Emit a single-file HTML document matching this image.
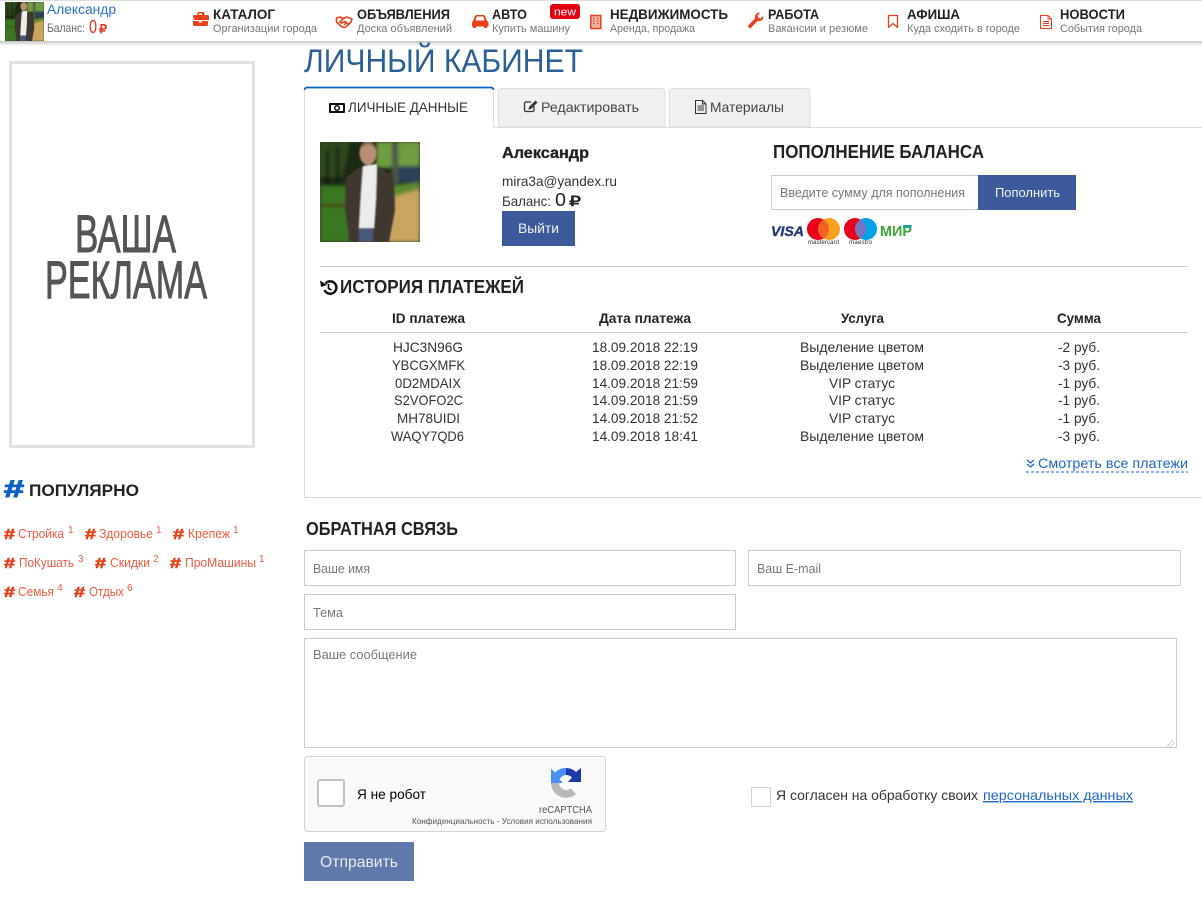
<!DOCTYPE html>
<html lang="ru"><head><meta charset="utf-8"><title>Личный кабинет</title>
<style>
html,body{margin:0;padding:0;background:#fff;width:1202px;height:909px;overflow:hidden}
svg{display:block}
text{font-family:"Liberation Sans",Arial,sans-serif;fill:#333;font-size:14px}
.b{font-weight:bold;fill:#222}
.s{fill:#777;font-size:11px}
.nav{font-weight:bold;fill:#222;font-size:14px}
.ph{fill:#777;font-size:13px}
.tag{fill:#ef5a40;font-size:13px}
.sup{fill:#ef5a40;font-size:10px}
.hash{fill:#e8401c;font-size:15px;font-weight:bold;stroke:#e8401c;stroke-width:.6px}
.m{text-anchor:middle}
</style></head><body>
<svg width="1202" height="909" viewBox="0 0 1202 909" xmlns="http://www.w3.org/2000/svg">
<defs>
<linearGradient id="sh" x1="0" y1="0" x2="0" y2="1"><stop offset="0" stop-color="#c4c4c4"/><stop offset="1" stop-color="#fff"/></linearGradient>
<filter id="bl"><feGaussianBlur stdDeviation="1.800"/></filter>
<filter id="bl2"><feGaussianBlur stdDeviation=".7"/></filter>
<clipPath id="cp"><rect x="0" y="0" width="100" height="100"/></clipPath>
<g id="ph" clip-path="url(#cp)">
<rect width="100" height="100" fill="#2c3f1e"/>
<g filter="url(#bl)">
<rect x="0" y="0" width="100" height="46" fill="#1c2a14"/>
<path d="M0 0H30L22 35H0Z" fill="#2e4a1c"/>
<rect x="6" y="8" width="3" height="36" fill="#14180f"/>
<rect x="16" y="5" width="3" height="38" fill="#14180f"/>
<rect x="57" y="0" width="43" height="25" fill="#6f9c42"/>
<rect x="72" y="0" width="6" height="42" fill="#4c5646"/>
<rect x="78" y="24" width="22" height="16" fill="#2a4158"/>
<rect x="0" y="44" width="30" height="56" fill="#3a7620"/>
<rect x="0" y="62" width="28" height="3" fill="#46401f"/>
<path d="M74 54L100 46V100H66Z" fill="#c9a55f"/>
<path d="M73 44L100 40V47L73 55Z" fill="#5f8a30"/>
</g>
<g filter="url(#bl2)">
<path d="M26 36L40 25H58L73 33L75 68L69 100H30L25 68Z" fill="#40372e"/>
<path d="M43 24L57 22L56 56L54 86H39L41 52Z" fill="#ececea"/>
<rect x="39" y="86" width="14" height="14" fill="#47587a"/>
<ellipse cx="48" cy="11" rx="8.500" ry="12" fill="#ba8d75"/>
<path d="M40 7Q48 -3 56 7L55 3Q48 -2 41 3Z" fill="#6d5648"/>
</g>
</g>
</defs>

<!-- header -->
<rect x="0" y="0" width="1202" height="41" fill="#fff"/>
<rect x="0" y="0" width="1202" height="1" fill="#ddd"/>
<rect x="0" y="41" width="1202" height="5" fill="url(#sh)"/>
<g transform="translate(5 2) scale(.39)"><use href="#ph"/></g>
<text x="47" y="14" style="fill:#2a6fd0" textLength="69" lengthAdjust="spacingAndGlyphs">Александр</text>
<text x="47" y="32" style="fill:#666;font-size:12px" textLength="38" lengthAdjust="spacingAndGlyphs">Баланс:</text>
<text x="89" y="33" style="fill:#e8301c;font-size:18px" textLength="8" lengthAdjust="spacingAndGlyphs">0</text>
<text x="99" y="33" style="fill:#e8301c;font-size:12px;font-weight:bold" textLength="8" lengthAdjust="spacingAndGlyphs">₽</text>

<!-- nav icons -->
<g fill="#e8401c">
<path d="M193 16.500a1.500 1.500 0 0 1 1.500-1.500h3V13.500a1.500 1.500 0 0 1 1.500-1.500h4a1.500 1.500 0 0 1 1.500 1.500V15h3a1.500 1.500 0 0 1 1.500 1.500V20h-15ZM199 13.500V15h3v-1.500h-3Z" fill-rule="evenodd"/>
<path d="M193 21h6v1.500h3V21h6v3.500a1.500 1.500 0 0 1-1.500 1.500h-12a1.500 1.500 0 0 1-1.500-1.500Z"/>
<path d="M473 21l2-5a1.500 1.500 0 0 1 1.500-1h7a1.500 1.500 0 0 1 1.500 1l2 5a2.500 2.500 0 0 1 1.500 2V26.500h-1.500v1.500h-3V26.500h-8V28h-3v-1.500H472V23a2.500 2.500 0 0 1 1-2ZM475.500 20.500h9l-1.300-4h-6.400Z" fill-rule="evenodd"/>
<path d="M749 27.500a1.700 1.700 0 0 1-.5-2.400l6.500-6.500a4.500 4.500 0 0 1 5.200-5.800l-2.600 2.700.6 2.400 2.400.6 2.600-2.600a4.500 4.500 0 0 1-5.700 5.200l-6.200 6.400a1.300 1.300 0 0 1-2.300 0Z"/>
</g>
<g fill="none" stroke="#e8401c">
<path d="M336.500 18l3.500 -1 3 1.500 3.500-1.500 5.500 2-1 3-4 4-2.500 1.500-3-1-4-3.500-1-1ZM343 19l-3 3 2 1 3-1.500 3.500 3M346 22l-1.500 3" stroke-width="1.600" stroke-linejoin="round"/>
<rect x="590.800" y="15.500" width="10" height="13" stroke-width="1.500" fill="#f6b3a4"/>
<path d="M593 18.500h1.500M597 18.500h1.500M593 21h1.500M597 21h1.500M593 23.500h1.500M597 23.500h1.500" stroke-width="1.300"/>
<path d="M888.500 15.500h9v12l-4.500-4-4.500 4Z" stroke-width="1.300" stroke-linejoin="round"/>
<path d="M1040.500 15.500h7.500l3.500 3.500v9.500H1040.500ZM1048 15.500v3.500h3.500M1043 21.500h6M1043 23.500h6M1043 25.500h6" stroke-width="1"/>
</g>

<!-- nav text -->
<text x="213" y="19" class="nav" textLength="62" lengthAdjust="spacingAndGlyphs">КАТАЛОГ</text>
<text x="213" y="32" class="s" textLength="104" lengthAdjust="spacingAndGlyphs">Организации города</text>
<text x="357" y="19" class="nav" textLength="93" lengthAdjust="spacingAndGlyphs">ОБЪЯВЛЕНИЯ</text>
<text x="357" y="32" class="s" textLength="95" lengthAdjust="spacingAndGlyphs">Доска объявлений</text>
<text x="492" y="19" class="nav" textLength="35" lengthAdjust="spacingAndGlyphs">АВТО</text>
<text x="492" y="32" class="s" textLength="78" lengthAdjust="spacingAndGlyphs">Купить машину</text>
<rect x="550" y="4" width="30" height="15" rx="3" fill="#e3000f"/>
<text x="554" y="15.500" style="fill:#fff;font-size:11px" textLength="22" lengthAdjust="spacingAndGlyphs">new</text>
<text x="610" y="19" class="nav" textLength="118" lengthAdjust="spacingAndGlyphs">НЕДВИЖИМОСТЬ</text>
<text x="610" y="32" class="s" textLength="85" lengthAdjust="spacingAndGlyphs">Аренда, продажа</text>
<text x="768" y="19" class="nav" textLength="51" lengthAdjust="spacingAndGlyphs">РАБОТА</text>
<text x="768" y="32" class="s" textLength="100" lengthAdjust="spacingAndGlyphs">Вакансии и резюме</text>
<text x="907" y="19" class="nav" textLength="53" lengthAdjust="spacingAndGlyphs">АФИША</text>
<text x="907" y="32" class="s" textLength="113" lengthAdjust="spacingAndGlyphs">Куда сходить в городе</text>
<text x="1060" y="19" class="nav" textLength="65" lengthAdjust="spacingAndGlyphs">НОВОСТИ</text>
<text x="1060" y="32" class="s" textLength="82" lengthAdjust="spacingAndGlyphs">События города</text>

<!-- sidebar ad -->
<rect x="10.500" y="62.500" width="243" height="384" fill="#fff" stroke="#e2e2e2" stroke-width="3"/>
<text x="75" y="252" style="fill:#555;font-size:53px;stroke:#555;stroke-width:1px" textLength="101" lengthAdjust="spacingAndGlyphs">ВАША</text>
<text x="45" y="298" style="fill:#555;font-size:53px;stroke:#555;stroke-width:1px" textLength="162" lengthAdjust="spacingAndGlyphs">РЕКЛАМА</text>

<!-- popular -->
<text x="4" y="497" style="fill:#0a62c8;font-size:24px;font-weight:bold;stroke:#0a62c8;stroke-width:1px" textLength="20" lengthAdjust="spacingAndGlyphs">#</text>
<text x="29" y="496" class="b" style="font-size:17px" textLength="110" lengthAdjust="spacingAndGlyphs">ПОПУЛЯРНО</text>
<text x="4" y="539" class="hash" textLength="11" lengthAdjust="spacingAndGlyphs">#</text><text x="18" y="538" class="tag" textLength="46" lengthAdjust="spacingAndGlyphs">Стройка</text><text x="68" y="533" class="sup">1</text>
<text x="85" y="539" class="hash" textLength="11" lengthAdjust="spacingAndGlyphs">#</text><text x="99" y="538" class="tag" textLength="54" lengthAdjust="spacingAndGlyphs">Здоровье</text><text x="156" y="533" class="sup">1</text>
<text x="173" y="539" class="hash" textLength="11" lengthAdjust="spacingAndGlyphs">#</text><text x="188" y="538" class="tag" textLength="42" lengthAdjust="spacingAndGlyphs">Крепеж</text><text x="233" y="533" class="sup">1</text>
<text x="4" y="568" class="hash" textLength="11" lengthAdjust="spacingAndGlyphs">#</text><text x="19" y="567" class="tag" textLength="55" lengthAdjust="spacingAndGlyphs">ПоКушать</text><text x="78" y="562" class="sup">3</text>
<text x="95" y="568" class="hash" textLength="11" lengthAdjust="spacingAndGlyphs">#</text><text x="110" y="567" class="tag" textLength="40" lengthAdjust="spacingAndGlyphs">Скидки</text><text x="153" y="562" class="sup">2</text>
<text x="170" y="568" class="hash" textLength="11" lengthAdjust="spacingAndGlyphs">#</text><text x="185" y="567" class="tag" textLength="71" lengthAdjust="spacingAndGlyphs">ПроМашины</text><text x="259" y="562" class="sup">1</text>
<text x="4" y="597" class="hash" textLength="11" lengthAdjust="spacingAndGlyphs">#</text><text x="18" y="596" class="tag" textLength="36" lengthAdjust="spacingAndGlyphs">Семья</text><text x="57" y="591" class="sup">4</text>
<text x="74" y="597" class="hash" textLength="11" lengthAdjust="spacingAndGlyphs">#</text><text x="89" y="596" class="tag" textLength="35" lengthAdjust="spacingAndGlyphs">Отдых</text><text x="127" y="591" class="sup">6</text>

<!-- title -->
<text x="304" y="72" style="fill:#2a5f98;font-size:32px" textLength="279" lengthAdjust="spacingAndGlyphs">ЛИЧНЫЙ КАБИНЕТ</text>

<!-- panel and tabs -->
<path d="M304.500 127V497.500H1202" fill="none" stroke="#ddd"/>
<path d="M494 127.500H1202" stroke="#ddd"/>
<path d="M304.500 127.500V91a3 3 0 0 1 3-3H490.500a3 3 0 0 1 3 3V127.500" fill="#fff" stroke="#ddd"/>
<path d="M304.500 90a2.500 2.500 0 0 1 2.500-2.500H491a2.500 2.500 0 0 1 2.500 2.500" fill="none" stroke="#0a62c0" stroke-width="1.800"/>
<path d="M498.500 127V91.500a3 3 0 0 1 3-3H662a3 3 0 0 1 3 3V127Z" fill="#f0f0f0" stroke="#ddd"/>
<path d="M669.500 127V91.500a3 3 0 0 1 3-3H807a3 3 0 0 1 3 3V127Z" fill="#f0f0f0" stroke="#ddd"/>
<!-- tab icons -->
<rect x="329" y="103" width="16" height="10" rx="1" fill="#111"/>
<rect x="331" y="105" width="12" height="6" fill="#fff"/>
<circle cx="337" cy="108" r="2.300" fill="none" stroke="#111" stroke-width="1.500"/>
<text x="348" y="112" style="font-size:14px;fill:#333" textLength="120" lengthAdjust="spacingAndGlyphs">ЛИЧНЫЕ ДАННЫЕ</text>
<path d="M534 106v4a1.500 1.500 0 0 1-1.500 1.500h-6.500a1.500 1.500 0 0 1-1.500-1.500v-6.500a1.500 1.500 0 0 1 1.500-1.500h5" fill="none" stroke="#333" stroke-width="1.300"/>
<path d="M528.500 109.500l.5-2.500 6.500-6.500 2 2-6.500 6.500Z" fill="#333"/>
<text x="541" y="112" style="font-size:14px;fill:#444" textLength="98" lengthAdjust="spacingAndGlyphs">Редактировать</text>
<path d="M695.500 100.500h7l3.500 3.500v9.500h-10.500ZM702.500 100.500v3.500h3.500M697.500 106h6.500M697.500 108h6.500M697.500 110h6.500" fill="none" stroke="#333" stroke-width="1"/>
<text x="710" y="112" style="font-size:14px;fill:#444" textLength="74" lengthAdjust="spacingAndGlyphs">Материалы</text>

<!-- profile -->
<g transform="translate(320 142)"><use href="#ph"/></g>
<text x="502" y="158" class="b" style="font-size:16px;stroke:#222;stroke-width:.35px" textLength="87" lengthAdjust="spacingAndGlyphs">Александр</text>
<text x="502" y="186" textLength="115" lengthAdjust="spacingAndGlyphs">mira3a@yandex.ru</text>
<text x="502" y="206" textLength="49" lengthAdjust="spacingAndGlyphs">Баланс:</text>
<text x="555" y="206" style="font-size:18px;fill:#222" textLength="11" lengthAdjust="spacingAndGlyphs">0</text>
<text x="569" y="206" style="font-size:14px;fill:#222;font-weight:bold" textLength="12" lengthAdjust="spacingAndGlyphs">₽</text>
<rect x="502" y="211" width="73" height="35" fill="#3c5a99"/>
<text x="518" y="233" style="fill:#f2f2f2" textLength="41" lengthAdjust="spacingAndGlyphs">Выйти</text>

<text x="773" y="158" class="b" style="font-size:18px" textLength="211" lengthAdjust="spacingAndGlyphs">ПОПОЛНЕНИЕ БАЛАНСА</text>
<rect x="771.500" y="175.500" width="207" height="34" fill="#fff" stroke="#ccc"/>
<text x="780" y="197" class="ph" textLength="185" lengthAdjust="spacingAndGlyphs">Введите сумму для пополнения</text>
<rect x="978" y="175" width="98" height="35" fill="#3c5a99"/>
<text x="995" y="197" style="fill:#f2f2f2;font-size:13px" textLength="65" lengthAdjust="spacingAndGlyphs">Пополнить</text>

<!-- payment logos -->
<text x="771" y="236" style="fill:#2a3a78;font-size:14px;font-weight:bold;font-style:italic;stroke:#2a3a78;stroke-width:.4px" textLength="33" lengthAdjust="spacingAndGlyphs">VISA</text>
<circle cx="818" cy="229" r="11" fill="#eb001b"/><circle cx="829" cy="229" r="11" fill="#f9a01e"/>
<path d="M823.500 219.500a11 11 0 0 1 0 19a11 11 0 0 1 0-19Z" fill="#f26122"/>
<text x="808" y="244" style="fill:#333;font-size:6px" textLength="31" lengthAdjust="spacingAndGlyphs">mastercard</text>
<circle cx="855" cy="229" r="11" fill="#eb001b"/><circle cx="866" cy="229" r="11" fill="#00a2e5"/>
<path d="M860.500 219.500a11 11 0 0 1 0 19a11 11 0 0 1 0-19Z" fill="#7673c0"/>
<text x="849" y="244" style="fill:#333;font-size:6px" textLength="23" lengthAdjust="spacingAndGlyphs">maestro</text>
<text x="880" y="236" style="fill:#3fa535;font-size:15px;font-weight:bold" textLength="32" lengthAdjust="spacingAndGlyphs">МИР</text>
<path d="M903 225h9l-1 3h-8Z" fill="#1ea3a0"/>

<path d="M320 266.500H1188" stroke="#ccc"/>

<!-- history -->
<path d="M323.500 283.500a6.200 6.200 0 1 1-1 6.500" fill="none" stroke="#111" stroke-width="2.500" transform="translate(2 0)"/>
<path d="M320 280.500l1 6.500 6-2Z" fill="#111"/>
<path d="M328.500 284v4.500l3 1.500" fill="none" stroke="#111" stroke-width="1.700"/>
<text x="340" y="293" class="b" style="font-size:18px" textLength="184" lengthAdjust="spacingAndGlyphs">ИСТОРИЯ ПЛАТЕЖЕЙ</text>

<text x="392" y="323" class="b" textLength="73" lengthAdjust="spacingAndGlyphs">ID платежа</text>
<text x="599" y="323" class="b" textLength="92" lengthAdjust="spacingAndGlyphs">Дата платежа</text>
<text x="841" y="323" class="b" textLength="43" lengthAdjust="spacingAndGlyphs">Услуга</text>
<text x="1057" y="323" class="b" textLength="44" lengthAdjust="spacingAndGlyphs">Сумма</text>
<path d="M320 332.500H1188" stroke="#ccc"/>

<text x="393" y="352" textLength="70" lengthAdjust="spacingAndGlyphs">HJC3N96G</text>
<text x="592" y="352" textLength="106" lengthAdjust="spacingAndGlyphs">18.09.2018 22:19</text>
<text x="800" y="352" textLength="124" lengthAdjust="spacingAndGlyphs">Выделение цветом</text>
<text x="1058" y="352" textLength="42" lengthAdjust="spacingAndGlyphs">-2 руб.</text>

<text x="392" y="370" textLength="73" lengthAdjust="spacingAndGlyphs">YBCGXMFK</text>
<text x="592" y="370" textLength="106" lengthAdjust="spacingAndGlyphs">18.09.2018 22:19</text>
<text x="800" y="370" textLength="124" lengthAdjust="spacingAndGlyphs">Выделение цветом</text>
<text x="1058" y="370" textLength="42" lengthAdjust="spacingAndGlyphs">-3 руб.</text>

<text x="395" y="388" textLength="66" lengthAdjust="spacingAndGlyphs">0D2MDAIX</text>
<text x="592" y="388" textLength="106" lengthAdjust="spacingAndGlyphs">14.09.2018 21:59</text>
<text x="829" y="388" textLength="66" lengthAdjust="spacingAndGlyphs">VIP статус</text>
<text x="1058" y="388" textLength="42" lengthAdjust="spacingAndGlyphs">-1 руб.</text>

<text x="394" y="405" textLength="69" lengthAdjust="spacingAndGlyphs">S2VOFO2C</text>
<text x="592" y="405" textLength="106" lengthAdjust="spacingAndGlyphs">14.09.2018 21:59</text>
<text x="829" y="405" textLength="66" lengthAdjust="spacingAndGlyphs">VIP статус</text>
<text x="1058" y="405" textLength="42" lengthAdjust="spacingAndGlyphs">-1 руб.</text>

<text x="397" y="423" textLength="63" lengthAdjust="spacingAndGlyphs">MH78UIDI</text>
<text x="592" y="423" textLength="106" lengthAdjust="spacingAndGlyphs">14.09.2018 21:52</text>
<text x="829" y="423" textLength="66" lengthAdjust="spacingAndGlyphs">VIP статус</text>
<text x="1058" y="423" textLength="42" lengthAdjust="spacingAndGlyphs">-1 руб.</text>

<text x="391" y="441" textLength="73" lengthAdjust="spacingAndGlyphs">WAQY7QD6</text>
<text x="592" y="441" textLength="106" lengthAdjust="spacingAndGlyphs">14.09.2018 18:41</text>
<text x="800" y="441" textLength="124" lengthAdjust="spacingAndGlyphs">Выделение цветом</text>
<text x="1058" y="441" textLength="42" lengthAdjust="spacingAndGlyphs">-3 руб.</text>

<path d="M1027 460l3.500 3 3.500-3M1027 464l3.500 3 3.500-3" fill="none" stroke="#1e66c8" stroke-width="1.300"/>
<text x="1038" y="468" style="fill:#1e66c8" textLength="150" lengthAdjust="spacingAndGlyphs">Смотреть все платежи</text>
<path d="M1026 472H1188" stroke="#1e66c8" stroke-dasharray="3 2"/>

<!-- feedback -->
<text x="306" y="535" class="b" style="font-size:18px" textLength="152" lengthAdjust="spacingAndGlyphs">ОБРАТНАЯ СВЯЗЬ</text>
<g fill="#fff" stroke="#ccc">
<rect x="304.500" y="550.500" width="431" height="35"/>
<rect x="748.500" y="550.500" width="432" height="35"/>
<rect x="304.500" y="594.500" width="431" height="35"/>
<rect x="304.500" y="638.500" width="872" height="109"/>
</g>
<text x="313" y="573" class="ph" textLength="57" lengthAdjust="spacingAndGlyphs">Ваше имя</text>
<text x="757" y="573" class="ph" textLength="64" lengthAdjust="spacingAndGlyphs">Ваш E-mail</text>
<text x="313" y="617" class="ph" textLength="30" lengthAdjust="spacingAndGlyphs">Тема</text>
<text x="313" y="659" class="ph" textLength="104" lengthAdjust="spacingAndGlyphs">Ваше сообщение</text>
<path d="M1173 740l-7 7M1174 743l-4 4" stroke="#aaa" stroke-dasharray="1 1" fill="none"/>

<!-- recaptcha -->
<rect x="304.500" y="756.500" width="301" height="75" rx="3" fill="#f9f9f9" stroke="#d3d3d3"/>
<rect x="318" y="780" width="26" height="26" rx="2" fill="#fff" stroke="#c1c1c1" stroke-width="2"/>
<text x="357" y="799" style="fill:#000" textLength="69" lengthAdjust="spacingAndGlyphs">Я не робот</text>
<path d="M551 783a15 15 0 0 0 25 11l-5-5.500a7.500 7.500 0 0 1-12-5.500Z" fill="#b8b8b8"/>
<path d="M566 768a15 15 0 0 0-11 4.500l-4-4V783h12l-3.500-3.500a8 8 0 0 1 6.500-4.500Z" fill="#4a90f2"/>
<path d="M566 768a15 15 0 0 1 10 4l5-4v14h-13l4-4.500a8 8 0 0 0-6-2.500Z" fill="#1c3aa9"/>
<text x="539" y="813" style="fill:#555;font-size:10px" textLength="53" lengthAdjust="spacingAndGlyphs">reCAPTCHA</text>
<text x="412" y="824" style="fill:#555;font-size:8px" textLength="180" lengthAdjust="spacingAndGlyphs">Конфиденциальность - Условия использования</text>

<rect x="304" y="842" width="110" height="39" fill="#6178ab"/>
<text x="320" y="867" style="fill:#e8ecf4;font-size:16px" textLength="78" lengthAdjust="spacingAndGlyphs">Отправить</text>

<rect x="751.500" y="787.500" width="19" height="19" fill="#fff" stroke="#cfd4dc"/>
<text x="776" y="800" textLength="202" lengthAdjust="spacingAndGlyphs">Я согласен на обработку своих</text>
<text x="983" y="800" style="fill:#1e66c8;text-decoration:underline" textLength="150" lengthAdjust="spacingAndGlyphs">персональных данных</text>
</svg>
</body></html>
